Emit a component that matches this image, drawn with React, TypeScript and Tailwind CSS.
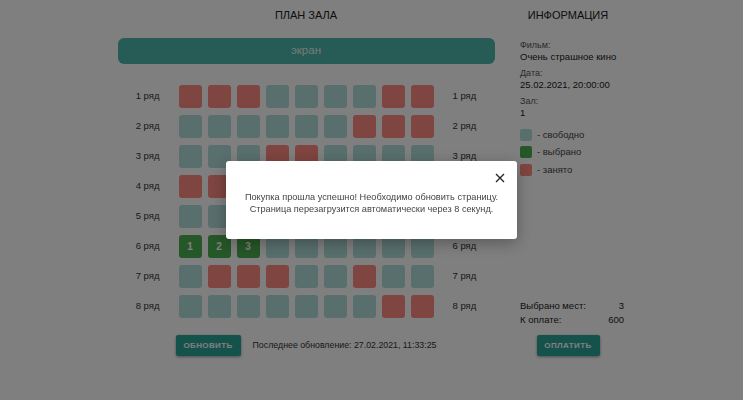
import React from "react";

type Seat = "free" | "taken" | "selected";

const F: Seat = "free";
const T: Seat = "taken";
const S: Seat = "selected";

// схема зала: 8 рядов по 9 мест
const hall: Seat[][] = [
  [T, T, T, F, F, F, F, T, T],
  [F, F, F, F, F, F, T, T, T],
  [F, F, F, T, T, F, F, F, F],
  [T, T, F, F, F, F, F, F, F],
  [F, F, F, F, F, F, F, F, F],
  [S, S, S, F, F, F, F, F, F],
  [F, T, T, T, F, F, T, F, F],
  [F, F, F, F, F, F, F, T, T],
];

function SeatBox({ state, num }: { state: Seat; num: number }) {
  if (state === "selected") {
    return (
      <div className="w-[23px] h-[23px] rounded-[3px] bg-[#4caf50] flex items-center justify-center text-white text-[10px] font-bold">
        {num}
      </div>
    );
  }
  return (
    <div
      className={
        state === "taken"
          ? "w-[23px] h-[23px] rounded-[3px] bg-[#ff8a80]"
          : "w-[23px] h-[23px] rounded-[3px] bg-[#b2dfdb]"
      }
    />
  );
}

function Legend({ color, label }: { color: string; label: string }) {
  return (
    <div className="flex items-center gap-[5px] h-[17.5px]">
      <span className={`w-[12px] h-[12px] rounded-[2px] ${color}`} />
      <span>- {label}</span>
    </div>
  );
}

export default function App() {
  return (
    <div className="min-h-screen bg-white text-[#212121] font-['Liberation_Sans',Arial,sans-serif]">
      <div className="flex pl-[100px]">
        {/* План зала */}
        <div className="w-[412px] flex flex-col items-center">
          <h2 className="mt-[7px] text-[11px] leading-[16px] uppercase">План зала</h2>
          <div className="mt-[15px] w-[377px] h-[26px] rounded-[6px] bg-[#4db6ac] flex items-center justify-center text-[11.5px] text-[#e8f6f4]">
            экран
          </div>

          <div className="mt-[21px] flex flex-col gap-[7px]">
            {hall.map((row, r) => (
              <div key={r} className="flex items-center text-[9.5px] text-[#333]">
                <span className="w-[40px] text-right">{r + 1} ряд</span>
                <div className="mx-[19px] flex gap-[6px]">
                  {row.map((s, i) => (
                    <SeatBox key={i} state={s} num={i + 1} />
                  ))}
                </div>
                <span className="w-[40px]">{r + 1} ряд</span>
              </div>
            ))}
          </div>

          <div className="mt-[17px] flex items-center gap-[12px]">
            <button className="w-[65px] h-[21px] rounded-[2px] bg-[#2aa596] text-white text-[8px] font-bold tracking-[0.4px] uppercase shadow-[0_1px_3px_rgba(0,0,0,0.4)]">
              Обновить
            </button>
            <span className="text-[8.8px] text-[#333]">Последнее обновление: 27.02.2021, 11:33:25</span>
          </div>
        </div>

        {/* Информация */}
        <div className="w-[116px] flex flex-col text-[9.5px]">
          <h2 className="mt-[7px] pr-[4px] text-[11px] leading-[16px] uppercase text-center">Информация</h2>
          <div className="mt-[16px] pl-[8px] leading-[12px] whitespace-nowrap">
            <div className="text-[#555] text-[9px]">Фильм:</div>
            <div>Очень страшное кино</div>
            <div className="mt-[4px] text-[#555] text-[9px]">Дата:</div>
            <div>25.02.2021, 20:00:00</div>
            <div className="mt-[4px] text-[#555] text-[9px]">Зал:</div>
            <div>1</div>
            <div className="mt-[7px] text-[#444]">
              <Legend color="bg-[#b2dfdb]" label="свободно" />
              <Legend color="bg-[#4caf50]" label="выбрано" />
              <Legend color="bg-[#ff8a80]" label="занято" />
            </div>
          </div>
          <div className="flex-1" />
          <div className="pl-[8px] pr-[4px] leading-[14px]">
            <div className="flex justify-between">
              <span>Выбрано мест:</span>
              <span>3</span>
            </div>
            <div className="flex justify-between">
              <span>К оплате:</span>
              <span>600</span>
            </div>
          </div>
          <div className="mt-[8px] pr-[4px] flex justify-center">
            <button className="w-[63px] h-[21px] rounded-[2px] bg-[#2aa596] text-white text-[8px] font-bold tracking-[0.4px] uppercase shadow-[0_1px_3px_rgba(0,0,0,0.4)]">
              Оплатить
            </button>
          </div>
        </div>
      </div>

      {/* Модальное окно */}
      <div className="fixed inset-0 bg-black/50 flex items-center justify-center">
        <div className="relative w-[291px] h-[78px] bg-white rounded-[3px] shadow-[0_4px_16px_rgba(0,0,0,0.3)]">
          <button className="absolute right-[11px] top-[11px] w-[12px] h-[12px] flex items-center justify-center">
            <svg width="10" height="10" viewBox="0 0 10 10" fill="none" stroke="#222" strokeWidth="1.3">
              <path d="M1 1l8 8M9 1l-8 8" />
            </svg>
          </button>
          <div className="pt-[30px] text-center text-[9.2px] leading-[12px] text-[#444]">
            <p>Покупка прошла успешно! Необходимо обновить страницу.</p>
            <p>Страница перезагрузится автоматически через 8 секунд.</p>
          </div>
        </div>
      </div>
    </div>
  );
}
